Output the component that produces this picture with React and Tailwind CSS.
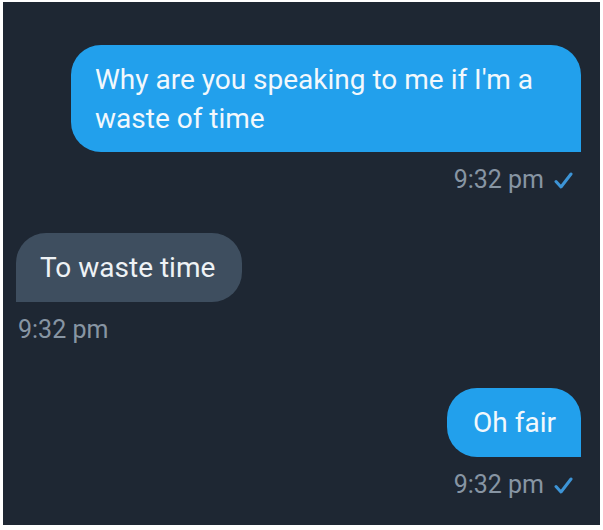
import React from 'react';

const Check = () => (
  <svg width="19" height="17" viewBox="0 0 19 17" className="ml-[10px]">
    <path d="M2 9.5 L7 15 L17 2" fill="none" stroke="#3d94d6" strokeWidth="3" strokeLinecap="round" strokeLinejoin="round" />
  </svg>
);

const Time = ({ mine }) => (
  <div className={`mt-[13px] flex items-center leading-[30px] text-[25px] text-[#8795a3] ${mine ? 'justify-end pr-[8px]' : 'pl-[2px]'}`}>
    <span>9:32 pm</span>
    {mine && <Check />}
  </div>
);

export default function App() {
  return (
    <div className="w-[603px] h-[530px] bg-white pt-[2px] pl-[3px]" style={{ fontFamily: 'Roboto, "Liberation Sans", sans-serif' }}>
      <div className="w-[597px] h-[523px] bg-[#1e2733] pt-[43px] pl-[13px] pr-[19px] flex flex-col">
        {/* outgoing */}
        <div className="flex flex-col items-end">
          <div className="w-[510px] bg-[#22a0ec] text-[#f2f8fc] text-[28px] leading-[39px] pl-[24px] pr-[30px] pt-[15px] pb-[14px] rounded-[30px] rounded-br-none">
            Why are you speaking to me if I'm a waste of time
          </div>
        </div>
        <Time mine />

        {/* incoming */}
        <div className="mt-[38px] flex">
          <div className="bg-[#3e4e5f] text-[#eef2f5] text-[28px] leading-[39px] pl-[24px] pr-[27px] py-[15px] rounded-[30px] rounded-bl-none">
            To waste time
          </div>
        </div>
        <Time />

        {/* outgoing */}
        <div className="mt-[43px] flex justify-end">
          <div className="bg-[#22a0ec] text-[#f2f8fc] text-[28px] leading-[39px] pl-[26px] pr-[25px] py-[15px] rounded-[30px] rounded-br-none">
            Oh fair
          </div>
        </div>
        <Time mine />
      </div>
    </div>
  );
}
